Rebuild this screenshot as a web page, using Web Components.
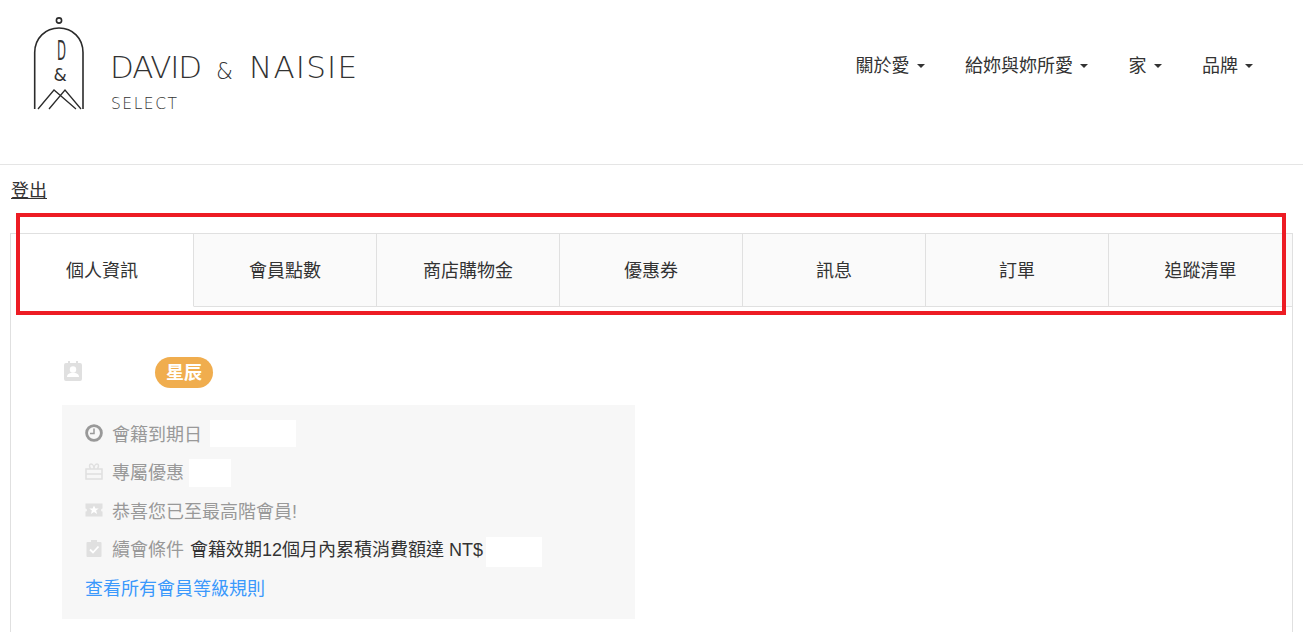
<!DOCTYPE html>
<html lang="zh-Hant">
<head>
<meta charset="utf-8">
<title>David & Maisie</title>
<style>
  html, body { margin: 0; height: 633px; overflow: hidden; background: #fff; }
  body { font: 18px/1.4 "Liberation Sans", "Noto Sans CJK TC", sans-serif; color: #333; }
</style>
</head>
<body>
<site-header>
  <nav-item>關於愛</nav-item>
  <nav-item>給妳與妳所愛</nav-item>
  <nav-item>家</nav-item>
  <nav-item>品牌</nav-item>
</site-header>
<logout-link>登出</logout-link>
<member-page>
  <tab-item active>個人資訊</tab-item>
  <tab-item>會員點數</tab-item>
  <tab-item>商店購物金</tab-item>
  <tab-item>優惠券</tab-item>
  <tab-item>訊息</tab-item>
  <tab-item>訂單</tab-item>
  <tab-item>追蹤清單</tab-item>
  <level-box slot="panel">
    <info-row icon="clock" label="會籍到期日"><blank-box w="86" h="27" left="2" top="-3.5"></blank-box></info-row>
    <info-row icon="gift" label="專屬優惠"><blank-box w="42" h="28" left="-1" top="-1.5"></blank-box></info-row>
    <info-row icon="ticket" label="恭喜您已至最高階會員!"></info-row>
    <info-row icon="check" label="續會條件"><span class="v">會籍效期12個月內累積消費額達 NT$</span><blank-box w="56" h="30" left="3" top="2.5"></blank-box></info-row>
    <a slot="link" href="#">查看所有會員等級規則</a>
  </level-box>
</member-page>

<script>
const headerTpl = document.createElement("template");
headerTpl.innerHTML = `
<style>
  :host { display: flex; height: 164px; border-bottom: 1px solid #e5e5e5; justify-content: space-between; }
  svg { display: block; flex: none; }
  text { fill: #333; }
  .name { font-family: "DejaVu Sans", sans-serif; font-weight: 200; }
  nav { display: flex; gap: 40.5px; padding: 53px 50px 0 0; align-items: flex-start; }
</style>
<svg width="370" height="164" viewBox="0 0 370 164">
  <g fill="none" stroke="#2b2b2b" stroke-width="1.6">
    <circle cx="59" cy="20.5" r="2.6"/>
    <path d="M34.7 109V52.5C34.7 38 45.500 28 59 28S83 38 83 52.500V109"/>
    <path d="M38 109 54 90 76 109M49 109 65 90 81 109" stroke-width="1.300"/>
  </g>
  <text class="name" x="57" y="60" font-size="27" textLength="9" lengthAdjust="spacingAndGlyphs" style="font-weight:400">D</text>
  <text class="name" x="53.500" y="81" font-size="17" style="font-weight:400">&amp;</text>
  <text class="name" x="110" y="78" font-size="31" textLength="92" lengthAdjust="spacing">DAVID</text>
  <text class="name" x="216" y="79" font-size="23" textLength="17" lengthAdjust="spacingAndGlyphs">&amp;</text>
  <text class="name" x="249" y="78" font-size="31" textLength="108" lengthAdjust="spacing">NAISIE</text>
  <text class="name" x="111" y="108.500" font-size="15.500" textLength="66" lengthAdjust="spacing">SELECT</text>
</svg>
<nav><slot></slot></nav>`;

class SiteHeader extends HTMLElement {
  constructor() {
    super();
    this.attachShadow({ mode: "open" });
    this.shadowRoot.appendChild(headerTpl.content.cloneNode(true));
  }
}
customElements.define("site-header", SiteHeader);

class NavItem extends HTMLElement {
  constructor() {
    super();
    this.attachShadow({ mode: "open" }).innerHTML = `
      <style>
        :host { display: flex; align-items: center; gap: 7px; color: #333; line-height: 26px; }
        i { width: 0; height: 0; border: 4.5px solid transparent; border-top-color: #333; border-bottom: 0; }
      </style>
      <slot></slot><i></i>`;
  }
}
customElements.define("nav-item", NavItem);

class LogoutLink extends HTMLElement {
  constructor() {
    super();
    this.attachShadow({ mode: "open" }).innerHTML = `
      <style>
        :host { display: block; padding: 13px 0 0 11px; height: 56px; box-sizing: border-box; line-height: 26px; margin-bottom: 12px; }
        a { color: #333; text-decoration: underline; }
      </style>
      <a href="#"><slot></slot></a>`;
  }
}
customElements.define("logout-link", LogoutLink);

class MemberPage extends HTMLElement {
  constructor() {
    super();
    this.attachShadow({ mode: "open" }).innerHTML = `
      <style>
        :host { display: block; position: relative; margin: 0 10px; border: 1px solid #e0e0e0; border-bottom: 0; }
        .tabs { display: grid; grid-template-columns: repeat(7, 183px); }
        .panel { padding: 50px 51px 13px; }
        /* 赤枠の注釈 */
        .mark { position: absolute; left: 5px; top: -21px; width: 1270px; height: 102px; box-sizing: border-box; border: 4px solid #ed1c24; pointer-events: none; }
      </style>
      <div class="tabs"><slot></slot></div>
      <div class="panel"><slot name="panel"></slot></div>
      <div class="mark"></div>`;
  }
}
customElements.define("member-page", MemberPage);

class TabItem extends HTMLElement {
  constructor() {
    super();
    this.attachShadow({ mode: "open" }).innerHTML = `
      <style>
        :host { display: flex; height: 73px; box-sizing: border-box; align-items: center; justify-content: center; background: #fafafa; border-right: 1px solid #e0e0e0; border-bottom: 1px solid #e0e0e0; color: #333; padding-top: 3px; }
        :host(:last-of-type) { border-right: 0; }
        :host([active]) { background: #fff; border-bottom-color: #fff; }
      </style>
      <slot></slot>`;
  }
}
customElements.define("tab-item", TabItem);

class LevelBox extends HTMLElement {
  constructor() {
    super();
    this.attachShadow({ mode: "open" }).innerHTML = `
      <style>
        :host { display: block; }
        .level { display: flex; align-items: center; height: 31px; margin-bottom: 17px; }
        svg { margin: -3px 0 0 2px; flex: none; }
        .badge { margin-left: 73px; height: 31px; padding: 0 11px; box-sizing: border-box; border-radius: 16px; background: #f0ad4e; color: #fff; font-weight: bold; line-height: 32px; }
        .box { width: 573px; box-sizing: border-box; background: #f7f7f7; padding: 11px 23px 10.5px; }
        .link { display: block; height: 38.5px; line-height: 38.5px; }
        ::slotted(a) { color: #3b99fc; text-decoration: none; }
      </style>
      <div class="level">
        <svg width="18" height="20" viewBox="0 0 18 20">
          <path fill="#e0e0e0" d="M4 0h2v2h6V0h2v2h2a2 2 0 0 1 2 2v14a2 2 0 0 1-2 2H2a2 2 0 0 1-2-2V4a2 2 0 0 1 2-2h2z"/>
          <circle cx="9" cy="8.500" r="3.200" fill="#fff"/>
          <path fill="#fff" d="M3 16c0-3 3-4.200 6-4.200s6 1.200 6 4.200z"/>
        </svg>
        <span class="badge">星辰</span>
      </div>
      <div class="box">
        <slot></slot>
        <span class="link"><slot name="link"></slot></span>
      </div>`;
  }
}
customElements.define("level-box", LevelBox);

const icons = {
  clock: `<circle cx="9" cy="9" r="7.400" fill="none" stroke="#999" stroke-width="2.800"/><path d="M9 4.500V9.500H5" fill="none" stroke="#999" stroke-width="1.500"/>`,
  gift: `<path fill="none" stroke="#e0e0e0" stroke-width="1.500" d="M1 7h16v10H1zM1 12h16M6 7C4 5 4 2 6 2s3 3 3 5c0-2 1-5 3-5s2 3 0 5"/>`,
  ticket: `<path fill="#e0e0e0" d="M.5 2.500h17v5a1.500 1.500 0 0 0 0 3v5H.5v-5a1.500 1.500 0 0 0 0-3z"/><path fill="#fff" d="m9 4.500 1.400 3h3.300l-2.600 2.100 1 3.400L9 11.100 5.900 13l1-3.400-2.600-2.100h3.300z"/>`,
  check: `<path fill="#e0e0e0" d="M6 1h6v2h3.500a1 1 0 0 1 1 1v13a1 1 0 0 1-1 1h-13a1 1 0 0 1-1-1V4a1 1 0 0 1 1-1H6z"/><path fill="none" stroke="#fff" stroke-width="1.800" d="m5 10.500 3 3 5.500-6"/>`,
};

class InfoRow extends HTMLElement {
  constructor() {
    super();
    this.attachShadow({ mode: "open" }).innerHTML = `
      <style>
        :host { display: flex; align-items: center; height: 38.5px; color: #333; }
        svg { flex: none; margin: -5px 9.500px 0 -.5px; }
        .label { color: #999; margin-right: 6px; }
        ::slotted(.v) { white-space: nowrap; }
      </style>
      <svg width="18" height="18" viewBox="0 0 18 18">${icons[this.getAttribute("icon")]}</svg>
      <span class="label">${this.getAttribute("label")}</span>
      <slot></slot>`;
  }
}
customElements.define("info-row", InfoRow);

// 隠された値の白い箱
class BlankBox extends HTMLElement {
  constructor() {
    super();
    const w = this.getAttribute("w");
    const h = this.getAttribute("h");
    const left = this.getAttribute("left") || 0;
    const top = this.getAttribute("top") || 0;
    this.attachShadow({ mode: "open" }).innerHTML = `
      <style>
        :host { display: block; flex: none; background: #fff; width: ${w}px; height: ${h}px; margin-left: ${left}px; margin-top: ${top}px; }
      </style>`;
  }
}
customElements.define("blank-box", BlankBox);
</script>
</body>
</html>
